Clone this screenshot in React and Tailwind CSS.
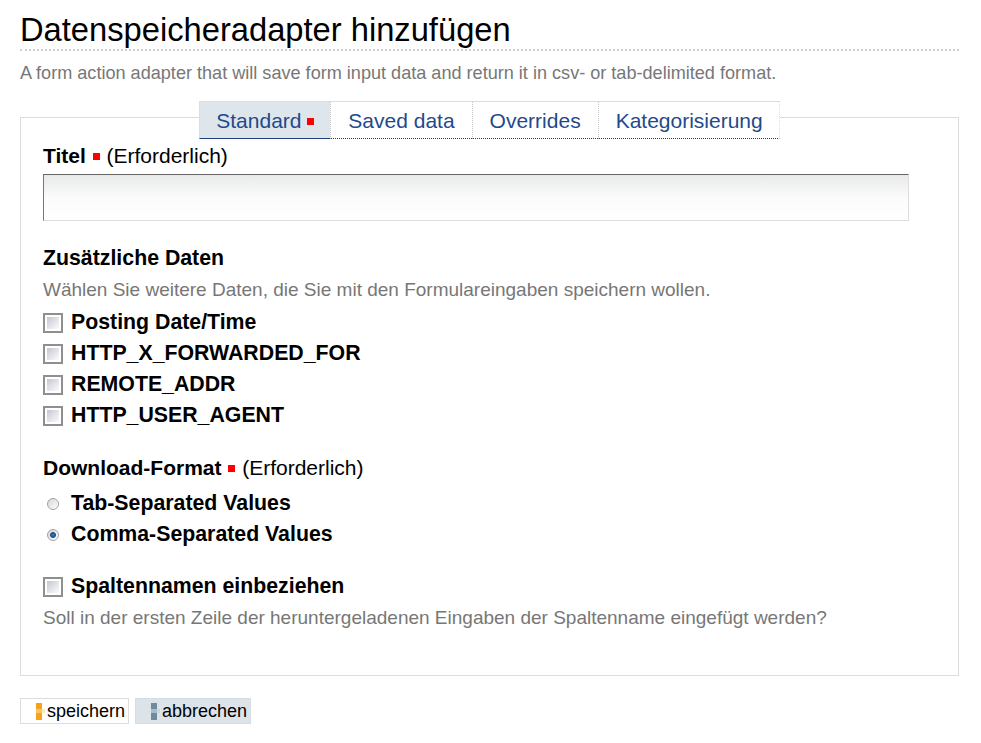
import React from "react";

const Required = ({ tab }) => (
  <span className={(tab ? "" : "mx-[1px] ") + "mb-[3px] inline-block h-[7px] w-[7px] bg-[#f00]"} />
);

function CheckBox() {
  return (
    <span className="flex h-[20px] w-[20px] shrink-0 border-2 border-[#8f8f8f] bg-white p-[2px]">
      <span className="h-full w-full bg-linear-to-br from-[#c3c6d0] via-[#e2e3e8] to-[#fbfbfb]" />
    </span>
  );
}

function Radio({ checked }) {
  return (
    <span className="flex w-[20px] shrink-0 justify-center">
      <span className="flex h-[12px] w-[12px] items-center justify-center rounded-full border border-[#a3a3a3] bg-linear-to-br from-[#d6d6d6] to-white">
        {checked && <span className="h-[6px] w-[6px] rounded-full border border-[#123f73] bg-[#2a6db5]" />}
      </span>
    </span>
  );
}

function Arrow({ dark, mid, light }) {
  return (
    <svg width="9" height="17" viewBox="0 0 9 17" className="mr-[2px] shrink-0">
      <rect x="0" y="0" width="6" height="6" fill={dark} />
      <rect x="0" y="6" width="6" height="4" fill={mid} />
      <rect x="6" y="6" width="3" height="4" fill={light} />
      <rect x="0" y="10" width="6" height="7" fill={dark} />
    </svg>
  );
}

const options = ["Posting Date/Time", "HTTP_X_FORWARDED_FOR", "REMOTE_ADDR", "HTTP_USER_AGENT"];
const tabs = ["Standard", "Saved data", "Overrides", "Kategorisierung"];

export default function App() {
  return (
    <div className="min-h-screen bg-white font-['Liberation_Sans',Arial,sans-serif] text-black">
      <div className="ml-[20px] w-[939px] pt-[12px]">
        <h1 className="border-b-2 border-dotted border-[#cfcfcf] pb-[1px] text-[32.7px] leading-[36px] font-normal">
          Datenspeicheradapter hinzufügen
        </h1>
        <p className="mt-[10px] text-[18.1px] leading-[24px] text-[#777]">
          A form action adapter that will save form input data and return it in csv- or tab-delimited format.
        </p>

        <div className="mt-[32px] border border-[#ddd] px-[22px] pb-[45px]">
          <div className="-mt-[17px] flex justify-center">
            <div className="flex border-t border-[#ddd] text-[21px] leading-[24px] text-[#1f4a8c]">
              {tabs.map((t, i) => (
                <div
                  key={t}
                  className={
                    "border-b border-b-[#1f3f7c] pt-[7px] pb-[5px] " +
                    (i === 0
                      ? "border-l border-l-[#ddd] bg-[#dee5eb] px-[16px]"
                      : "border-l border-dotted border-l-[#c8c8c8] bg-white px-[17px]") +
                    (i === tabs.length - 1 ? " border-r border-r-[#ddd] pr-[16px]" : "")
                  }
                >
                  {t}
                  {i === 0 && (
                    <>
                      {" "}
                      <Required tab />
                    </>
                  )}
                </div>
              ))}
            </div>
          </div>

          <div className="mt-[5px] text-[21px] leading-[24px]">
            <span className="font-bold">Titel</span> <Required /> (Erforderlich)
          </div>
          <div className="mt-[6px] h-[47px] w-[866px] border border-t-[#666] border-l-[#777] border-r-[#ddd] border-b-[#ddd] bg-linear-to-b from-[#e8e9e9] via-[#fbfbfb] to-white" />

          <div className="mt-[25px] text-[21.3px] leading-[24px] font-bold">Zusätzliche Daten</div>
          <p className="mt-[8px] text-[19px] leading-[24px] text-[#777]">
            Wählen Sie weitere Daten, die Sie mit den Formulareingaben speichern wollen.
          </p>
          <div className="mt-[5px]">
            {options.map((o) => (
              <div key={o} className="flex h-[31px] items-center gap-[8px]">
                <CheckBox />
                <span className="text-[21.3px] leading-[31px] font-bold">{o}</span>
              </div>
            ))}
          </div>

          <div className="mt-[25px] text-[21px] leading-[24px]">
            <span className="font-bold">Download-Format</span> <Required /> (Erforderlich)
          </div>
          <div className="mt-[8px]">
            <div className="flex h-[31px] items-center gap-[8px]">
              <Radio />
              <span className="text-[21.3px] leading-[31px] font-bold">Tab-Separated Values</span>
            </div>
            <div className="flex h-[31px] items-center gap-[8px]">
              <Radio checked />
              <span className="text-[21.3px] leading-[31px] font-bold">Comma-Separated Values</span>
            </div>
          </div>

          <div className="mt-[21px] flex h-[31px] items-center gap-[8px]">
            <CheckBox />
            <span className="text-[21.3px] leading-[31px] font-bold">Spaltennamen einbeziehen</span>
          </div>
          <p className="mt-[4px] text-[19px] leading-[24px] text-[#777]">
            Soll in der ersten Zeile der heruntergeladenen Eingaben der Spaltenname eingefügt werden?
          </p>
        </div>

        <div className="mt-[22px] flex gap-[6px] text-[18px] leading-[24px]">
          <button className="flex items-center border border-[#ddd] bg-white pl-[15px] pr-[3px]">
            <Arrow dark="#f7a21b" mid="#fbc763" light="#fde7bd" />
            speichern
          </button>
          <button className="flex items-center border border-[#d6dde2] bg-[#dde4e9] pl-[15px] pr-[3px]">
            <Arrow dark="#6f8c9f" mid="#a9bdc9" light="#c9d6de" />
            abbrechen
          </button>
        </div>
      </div>
    </div>
  );
}
